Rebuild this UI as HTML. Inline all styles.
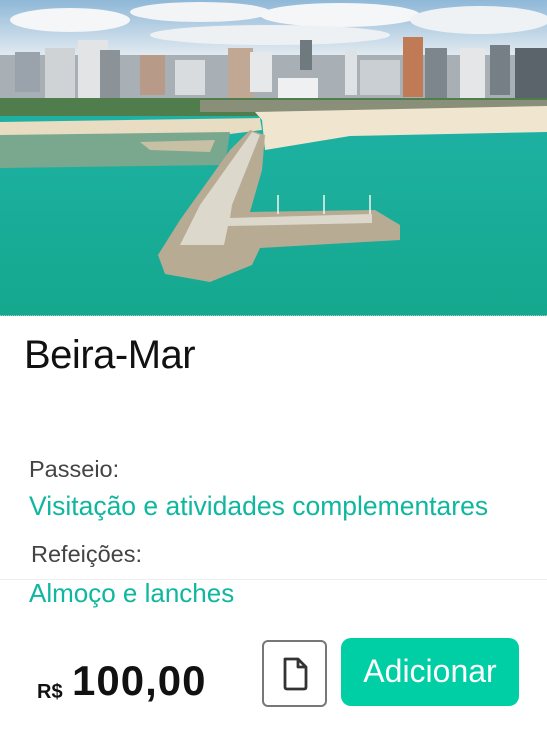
<!DOCTYPE html>
<html><head><meta charset="utf-8"><style>
html,body{margin:0;padding:0;background:#fff;}
body{width:547px;height:741px;position:relative;overflow:hidden;font-family:"Liberation Sans",sans-serif;}
.abs{position:absolute;white-space:nowrap;}
</style></head><body>
<svg class="abs" style="left:0;top:0" width="547" height="316" viewBox="0 0 547 316">
<defs>
<linearGradient id="sky" x1="0" y1="0" x2="0" y2="1"><stop offset="0" stop-color="#8fb8d8"/><stop offset="1" stop-color="#e8eef2"/></linearGradient>
<linearGradient id="sea" x1="0" y1="0" x2="0" y2="1"><stop offset="0" stop-color="#24b7b0"/><stop offset="1" stop-color="#14a88e"/></linearGradient>
</defs>
<rect width="547" height="316" fill="url(#sea)"/>
<rect width="547" height="60" fill="url(#sky)"/>
<ellipse cx="70" cy="20" rx="60" ry="12" fill="#f4f6f8"/>
<ellipse cx="200" cy="12" rx="70" ry="10" fill="#f2f4f6"/>
<ellipse cx="340" cy="15" rx="80" ry="12" fill="#f4f6f8"/>
<ellipse cx="480" cy="20" rx="70" ry="14" fill="#eef2f5"/>
<ellipse cx="270" cy="35" rx="120" ry="10" fill="#eef1f4"/>
<g fill="#9aa3ab">
<rect x="0" y="55" width="547" height="50" fill="#a9b0b5"/>
<rect x="15" y="52" width="25" height="40"/><rect x="45" y="48" width="30" height="55" fill="#cfd3d6"/>
<rect x="78" y="40" width="30" height="65" fill="#e2e4e6"/><rect x="100" y="50" width="20" height="50" fill="#8c9398"/>
<rect x="140" y="55" width="25" height="40" fill="#b89a88"/><rect x="175" y="60" width="30" height="35" fill="#d8dcdf"/>
<rect x="228" y="48" width="25" height="50" fill="#c0a894"/><rect x="250" y="52" width="22" height="40" fill="#e6e8ea"/>
<rect x="278" y="78" width="40" height="25" fill="#eef0f1"/><rect x="300" y="40" width="12" height="30" fill="#6f7a7f"/>
<rect x="345" y="50" width="12" height="45" fill="#dfe2e4"/><rect x="360" y="60" width="40" height="35" fill="#c9cfd3"/>
<rect x="403" y="37" width="20" height="60" fill="#c07a55"/><rect x="425" y="48" width="22" height="50" fill="#7c868c"/>
<rect x="460" y="48" width="25" height="50" fill="#e4e6e8"/><rect x="490" y="45" width="20" height="50" fill="#767f85"/>
<rect x="515" y="48" width="32" height="50" fill="#5a646a"/>
</g>
<rect x="0" y="98" width="547" height="18" fill="#4f7d4c"/>
<rect x="200" y="100" width="347" height="12" fill="#8a8f7a"/>
<path d="M0 122 L260 118 L262 130 L230 134 L0 138Z" fill="#e8dcc2"/>
<path d="M255 112 L547 106 L547 132 L350 136 L265 150 L262 120Z" fill="#f0e6d0"/>
<path d="M0 135 L230 132 L225 165 L0 168Z" fill="#7aa88f"/>
<path d="M140 142 L215 140 L210 152 L150 150Z" fill="#c8c0a4"/>
<path d="M250 130 L265 135 L262 170 L250 212 L375 210 L400 225 L400 240 L260 248 L252 265 L210 282 L165 274 L158 255 L180 220 L230 150Z" fill="#b8ab94"/>
<path d="M252 132 L260 135 L232 205 L230 218 L372 214 L372 223 L228 226 L224 245 L180 245 L200 205Z" fill="#ddd8cc"/>
<g stroke="#f4f4f4" stroke-width="1.5"><line x1="278" y1="195" x2="278" y2="214"/><line x1="324" y1="195" x2="324" y2="214"/><line x1="370" y1="195" x2="370" y2="214"/></g>
<line x1="0" y1="315.5" x2="547" y2="315.5" stroke="#8fd0c2" stroke-dasharray="1 1"/>
</svg>
<div class="abs" style="left:24px;top:333px;font-size:40px;color:#111;letter-spacing:-0.5px;">Beira-Mar</div>
<div class="abs" style="left:29px;top:456px;font-size:23.5px;color:#444;">Passeio:</div>
<div class="abs" style="left:29px;top:491px;font-size:26.5px;color:#0fb79f;">Visitação e atividades complementares</div>
<div class="abs" style="left:31px;top:541px;font-size:23.5px;color:#444;">Refeições:</div>
<div class="abs" style="left:0;top:579px;width:547px;height:1px;background:#eee;"></div>
<div class="abs" style="left:29px;top:578px;font-size:26px;color:#0fb79f;">Almoço e lanches</div>
<div class="abs" style="left:37px;top:681px;font-size:20px;font-weight:bold;color:#111;">R$</div>
<div class="abs" style="left:72px;top:657px;font-size:42px;font-weight:bold;color:#111;letter-spacing:1px;">100,00</div>
<div class="abs" style="left:262px;top:640px;width:65px;height:67px;border:2px solid #777;border-radius:6px;box-sizing:border-box;"></div>
<svg class="abs" style="left:281px;top:656px" width="28" height="36" viewBox="0 0 28 36"><path d="M4 3 H17 L25 11 V31 Q25 33 23 33 H6 Q4 33 4 31Z M17 3 V11 H25" fill="none" stroke="#333" stroke-width="2.8" stroke-linejoin="round"/></svg>
<div class="abs" style="left:341px;top:638px;width:178px;height:68px;background:#00cfa6;border-radius:10px;color:#fff;font-size:32px;text-align:center;line-height:66px;">Adicionar</div>
</body></html>
